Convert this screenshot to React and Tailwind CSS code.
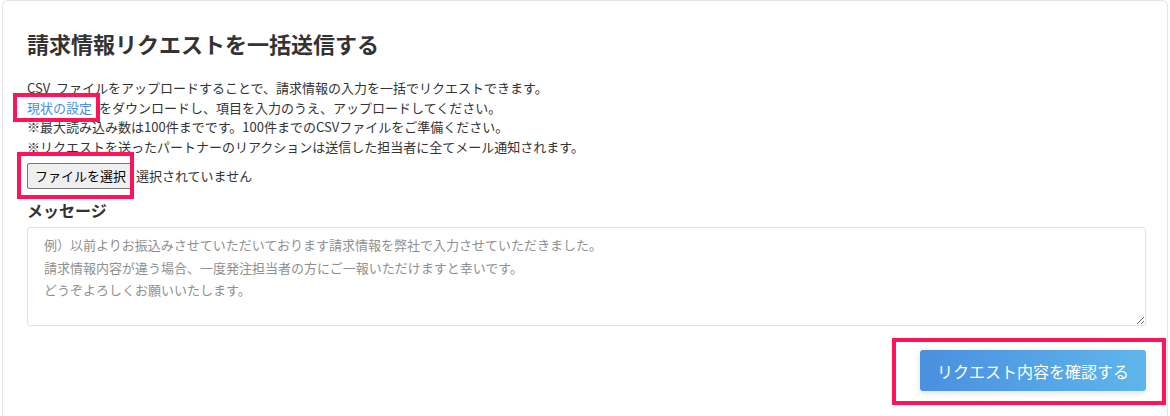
import React from "react";

const font = { fontFamily: '"Noto Sans CJK JP", "Noto Sans", sans-serif' };

// annotation frame drawn over an element
const Mark = ({ className }) => (
  <span className={`pointer-events-none absolute border-[4px] border-[#ff1459] ${className}`} />
);

const placeholder =
  "例）以前よりお振込みさせていただいております請求情報を弊社で入力させていただきました。\n請求情報内容が違う場合、一度発注担当者の方にご一報いただけますと幸いです。\nどうぞよろしくお願いいたします。";

export default function App() {
  return (
    <div className="min-h-screen bg-white px-[2px]" style={font}>
      <div className="min-h-[430px] rounded-t-md border border-b-0 border-[#e4e4e4] pl-[24px] pr-[21px] pt-[27px] pb-[30px] text-[#333]">
        <h2 className="text-[22px] font-bold leading-[30px]">
          請求情報リクエストを一括送信する
        </h2>

        <div className="mt-[20px] text-[13px] leading-[19.5px]">
          <p>CSV&nbsp; ファイルをアップロードすることで、請求情報の入力を一括でリクエストできます。</p>
          <p>
            <span className="relative mr-[7px]">
              <a href="#" className="text-[#4a90e2]">現状の設定</a>
              <Mark className="-left-[14px] -right-[8px] -top-[5px] -bottom-[5px]" />
            </span>
            をダウンロードし、項目を入力のうえ、アップロードしてください。
          </p>
          <p>※最大読み込み数は100件までです。100件までのCSVファイルをご準備ください。</p>
          <p>※リクエストを送ったパートナーのリアクションは送信した担当者に全てメール通知されます。</p>
        </div>

        <div className="mt-[7px] flex items-center text-[13px]">
          <span className="relative">
            <button
              type="button"
              className="h-[26px] w-[107px] rounded-[2px] border border-[#767676] bg-[#efefef] text-[13px] text-black"
            >
              ファイルを選択
            </button>
            <Mark className="-left-[10px] -right-[0px] -top-[11px] -bottom-[10px]" />
          </span>
          <span className="ml-[2px]">選択されていません</span>
        </div>

        <label className="mt-[10px] block text-[16px] font-bold leading-[22px]">メッセージ</label>
        <textarea
          className="mt-[6px] block h-[99px] w-full resize-y rounded-[3px] border border-[#dce3e6] px-[16px] pt-[6px] text-[13px] leading-[22.5px] text-[#333] outline-none placeholder:text-[#8f8f8f]"
          placeholder={placeholder}
        />

        <div className="mt-[24px] flex justify-end">
          <span className="relative">
            <button
              type="button"
              className="h-[41px] w-[226px] rounded-[3px] bg-gradient-to-r from-[#4a8fe0] to-[#5fb6eb] text-[16px] text-white shadow-[0_2px_6px_rgba(0,0,0,0.12)]"
            >
              リクエスト内容を確認する
            </button>
            <Mark className="-left-[28px] -right-[20px] -top-[12px] -bottom-[14px]" />
          </span>
        </div>
      </div>
    </div>
  );
}
